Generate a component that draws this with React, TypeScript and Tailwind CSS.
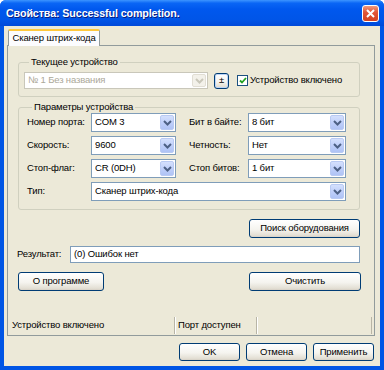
import { FC, ReactNode } from "react";

const FONT = "font-['Liberation_Sans',Arial,sans-serif]";

const Chevron: FC<{ color: string }> = ({ color }) => (
  <svg width="9" height="6" viewBox="0 0 9 6">
    <path d="M1 1 L4.5 4.5 L8 1" fill="none" stroke={color} strokeWidth="2" />
  </svg>
);

const Combo: FC<{ value: string; className?: string; disabled?: boolean }> = ({
  value,
  className = "",
  disabled,
}) => (
  <div
    className={`flex items-center bg-white pl-[3px] pr-[1px] border ${
      disabled ? "border-[#C9C7BA] text-[#ACA899]" : "border-[#7F9DB9] text-black"
    } ${className}`}
  >
    <span className="flex-1 truncate">{value}</span>
    <div
      className={`w-[14px] self-stretch my-[1px] rounded-[2px] flex items-center justify-center ${
        disabled
          ? "bg-[#F3F1EA] border border-[#E1DED4]"
          : "bg-[linear-gradient(180deg,#D4E0FD_0%,#BCCDF9_60%,#AFC3F5_100%)] border border-[#B9CAF3]"
      }`}
    >
      <Chevron color={disabled ? "#C9C7BA" : "#4D6185"} />
    </div>
  </div>
);

const Button: FC<{ children: ReactNode; className?: string }> = ({ children, className = "" }) => (
  <div
    className={`flex items-center justify-center border border-[#003C74] rounded-[3px] bg-[linear-gradient(180deg,#FFFFFF_0%,#F5F4EF_55%,#E3DFD4_90%,#D6D0C5_100%)] text-black ${className}`}
  >
    {children}
  </div>
);

const Group: FC<{ title: string; className?: string; children: ReactNode }> = ({
  title,
  className = "",
  children,
}) => (
  <fieldset className={`border border-[#D0D0BF] rounded-[3px] ${className}`}>
    <legend className="ml-[5px] px-[2px] leading-[12px]">{title}</legend>
    {children}
  </fieldset>
);

const Row: FC<{ l1: string; v1: string; l2: string; v2: string }> = ({ l1, v1, l2, v2 }) => (
  <div className="flex items-center h-[19px]">
    <span className="w-[64px]">{l1}</span>
    <Combo value={v1} className="w-[85px] h-[19px]" />
    <span className="w-[59px] ml-[13px]">{l2}</span>
    <Combo value={v2} className="w-[98px] h-[19px]" />
  </div>
);

export default function App() {
  return (
    <div
      className={`w-[384px] h-[370px] flex flex-col bg-[#0055E5] rounded-t-[6px] overflow-hidden text-[9.5px] tracking-[-0.15px] ${FONT}`}
    >
      {/* title bar */}
      <div className="h-[26px] flex items-center pl-[6px] pr-[4px] bg-[linear-gradient(180deg,#3D95FF_0%,#0A66F5_12%,#0058EE_35%,#0055E8_75%,#0049D9_100%)]">
        <span className="flex-1 text-white font-bold text-[10.7px] tracking-[-0.1px] [text-shadow:1px_1px_#0A1E80]">
          Свойства: Successful completion.
        </span>
        <div className="w-[17px] h-[17px] mr-[1px] rounded-[3px] border border-white bg-[linear-gradient(180deg,#F09A7E_0%,#E2583A_40%,#D4411F_100%)] flex items-center justify-center">
          <svg width="9" height="9" viewBox="0 0 9 9">
            <path d="M1 1 L8 8 M8 1 L1 8" stroke="white" strokeWidth="2" />
          </svg>
        </div>
      </div>

      {/* body */}
      <div className="flex-1 mx-[4px] mb-[4px] bg-[#ECE9D8] flex flex-col pt-[3px] pl-[3px] pr-[5px] pb-[5px]">
        <div className="flex h-[16px] relative z-10">
          <div className="ml-[1px] w-[92px] h-[17px] bg-[#FCFCFE] border-x border-[#919B9C] border-t-[2px] border-t-[#FFC83C] rounded-t-[2px] flex items-center justify-center whitespace-nowrap">
            Сканер штрих-кода
          </div>
        </div>

        <div className="flex-1 border border-[#919B9C] flex flex-col">
          <Group title="Текущее устройство" className="mt-[10px] ml-[10px] w-[342px] pt-[4px] pb-[7px] pl-[5px]">
            <div className="flex items-center">
              <Combo value="№ 1 Без названия" disabled className="w-[184px] h-[17px]" />
              <Button className="ml-[6px] w-[15px] h-[16px] border-[#2C55A8] shadow-[inset_0_0_0_1px_#BCD4F6]">
                ±
              </Button>
              <div className="ml-[8px] w-[11px] h-[11px] border border-[#1C5180] bg-white flex items-center justify-center">
                <svg width="8" height="7" viewBox="0 0 8 7">
                  <path d="M1 3.5 L3 5.5 L7 1" fill="none" stroke="#21A121" strokeWidth="1.8" />
                </svg>
              </div>
              <span className="ml-[2px]">Устройство включено</span>
            </div>
          </Group>

          <Group
            title="Параметры  устройства"
            className="mt-[4px] ml-[10px] w-[342px] pb-[8px] pl-[8px] flex flex-col gap-[4px]"
          >
            <div className="flex flex-col gap-[4px]">
              <Row l1="Номер порта:" v1="COM 3" l2="Бит в байте:" v2="8 бит" />
              <Row l1="Скорость:" v1="9600" l2="Четность:" v2="Нет" />
              <Row l1="Стоп-флаг:" v1="CR (0DH)" l2="Стоп битов:" v2="1 бит" />
              <div className="flex items-center h-[19px]">
                <span className="w-[64px]">Тип:</span>
                <Combo value="Сканер штрих-кода" className="w-[255px] h-[19px]" />
              </div>
            </div>
          </Group>

          <div className="flex mt-[9px] ml-[241px]">
            <Button className="w-[111px] h-[19px]">Поиск оборудования</Button>
          </div>

          <div className="flex items-center mt-[8px] ml-[9px]">
            <span className="w-[53px]">Результат:</span>
            <div className="w-[290px] h-[17px] border border-[#7F9DB9] bg-white pl-[3px] flex items-center">
              (0) Ошибок нет
            </div>
          </div>

          <div className="flex mt-[9px] ml-[10px]">
            <Button className="w-[86px] h-[19px]">О программе</Button>
            <Button className="w-[112px] h-[19px] ml-[145px]">Очистить</Button>
          </div>

          <div className="mt-auto mb-[1px] h-[17px] flex items-center">
            <div className="w-[167px] pl-[4px] h-full flex items-center border-r border-[#B8B5A6] shadow-[1px_0_0_#FFFFFF]">
              Устройство включено
            </div>
            <div className="w-[82px] pl-[3px] h-full flex items-center border-r border-[#B8B5A6] shadow-[1px_0_0_#FFFFFF]">
              Порт доступен
            </div>
            <div className="w-[115px] h-full border-r border-[#B8B5A6]" />
          </div>
        </div>

        <div className="flex justify-end gap-[6px] mt-[7px] pr-[1px]">
          <Button className="w-[61px] h-[18px]">OK</Button>
          <Button className="w-[61px] h-[18px]">Отмена</Button>
          <Button className="w-[61px] h-[18px]">Применить</Button>
        </div>
      </div>
    </div>
  );
}
